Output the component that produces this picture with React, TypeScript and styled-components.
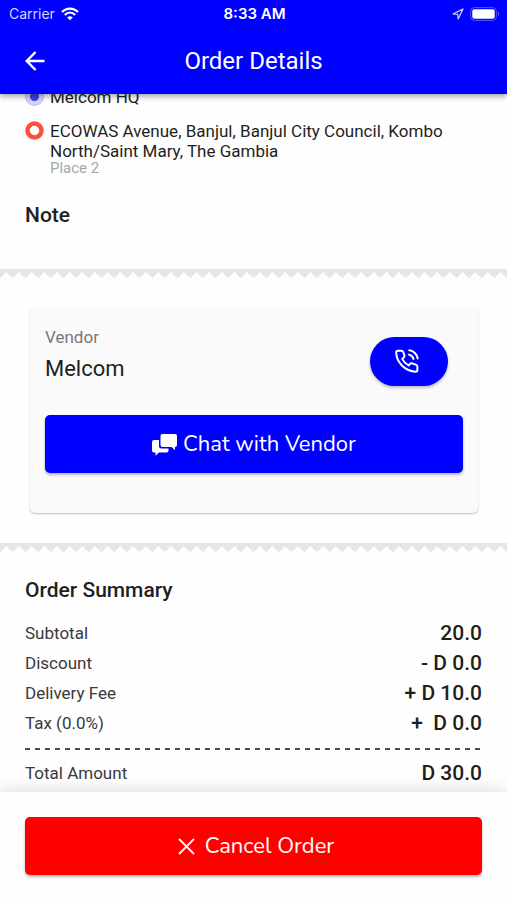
import React from "react";
import styled, { createGlobalStyle } from "styled-components";

const GlobalStyle = createGlobalStyle`
  *, *::before, *::after { box-sizing: border-box; }
  body {
    margin: 0;
    background: #fefefe;
    color: #1f1f21;
    font-family: Roboto, "Liberation Sans", sans-serif;
  }
  h1, h2, p, dl, dd, ul { margin: 0; padding: 0; }
`;

const Screen = styled.div`
  display: flex;
  flex-direction: column;
  height: 100vh;
`;

const Header = styled.header`
  z-index: 1;
  flex: none;
  background: #0000ff;
  color: #fff;
  box-shadow: 0 2px 6px rgba(0, 0, 0, 0.4);
`;

const StatusBar = styled.div`
  display: grid;
  grid-template-columns: 1fr auto 1fr;
  align-items: center;
  height: 28px;
  padding: 0 7px 0 9px;
  font: 14px/20px Inter, sans-serif;
`;

const StatusGroup = styled.div<{ $end?: boolean }>`
  display: flex;
  align-items: center;
  justify-content: ${(p) => (p.$end ? "flex-end" : "flex-start")};
  gap: 6px;
  color: #d6d6ff;
`;

const Clock = styled.time`
  font-size: 15px;
  font-weight: 600;
`;

const AppBar = styled.div`
  display: grid;
  grid-template-columns: 48px 1fr 48px;
  align-items: center;
  height: 66px;
  padding: 0 11px;
`;

const IconButton = styled.button`
  display: grid;
  place-items: center;
  height: 48px;
  padding: 0;
  border: 0;
  background: none;
  color: inherit;
`;

const Title = styled.h1`
  text-align: center;
  font-size: 24px;
  line-height: 32px;
  font-weight: 400;
`;

/* column-reverse keeps the list scrolled to its last line */
const Scroller = styled.main`
  display: flex;
  flex: 1;
  flex-direction: column-reverse;
  min-height: 0;
  overflow-y: auto;
  scrollbar-width: none;
`;

const Content = styled.div`
  flex: none;
`;

const Section = styled.section<{ $bottom?: number }>`
  padding: 0 25px ${(p) => p.$bottom ?? 0}px;
`;

const Stops = styled.ul`
  display: grid;
  gap: 14px;
  list-style: none;
  font-size: 17px;
  line-height: 20px;
`;

const Stop = styled.li`
  display: grid;
  grid-template-columns: 19px 1fr;
  gap: 6px;
`;

const StopNote = styled.p`
  color: #a3a6ad;
  font-size: 15px;
  line-height: 15px;
`;

const Heading = styled.h2`
  font-size: 21px;
  line-height: 28px;
  font-weight: 500;
`;

const NoteHeading = styled(Heading)`
  margin-top: 25px;
`;

const TornEdge = styled.div`
  height: 9px;
  background:
    linear-gradient(#e5e6e8, #e5e6e8) top / 100% 3px no-repeat,
    conic-gradient(from 134deg at 50% 0, #fefefe 0 90deg, #e5e6e8 92deg 358deg, #fefefe) 0 3px / 2.5% 6px repeat-x;
`;

const VendorCard = styled.section`
  margin: 30px 29px 30px 30px;
  padding: 18px 15px 40px;
  border-radius: 5px;
  background: #fafafa;
  box-shadow: 0 1px 2px rgba(0, 0, 0, 0.24);
`;

const VendorRow = styled.div`
  display: flex;
  align-items: center;
  justify-content: space-between;
  margin-bottom: 25px;
  padding-right: 15px;
`;

const VendorLabel = styled.p`
  color: #77777b;
  font-size: 17px;
  line-height: 22px;
`;

const VendorName = styled.p`
  padding: 5px 0;
  font-size: 22px;
  line-height: 32px;
`;

const CallButton = styled.button`
  display: grid;
  place-items: center;
  width: 78px;
  height: 49px;
  margin-top: 6px;
  padding: 0 4px 0 0;
  border: 0;
  border-radius: 25px;
  background: #0000ff;
  color: #fff;
  box-shadow: 0 2px 3px rgba(0, 0, 0, 0.24);
`;

const ActionButton = styled.button<{ $color: string; $gap: number }>`
  display: flex;
  align-items: center;
  justify-content: center;
  gap: ${(p) => p.$gap}px;
  width: 100%;
  height: 58px;
  padding: 0;
  border: 0;
  border-radius: 5px;
  background: ${(p) => p.$color};
  color: #fff;
  box-shadow: 0 2px 3px rgba(0, 0, 0, 0.28);
  font: 22px/30px Nunito, "Open Sans", sans-serif;
`;

const SummaryHeading = styled(Heading)`
  margin: 24px 0 14px;
`;

const Amounts = styled.dl`
  display: grid;
`;

const AmountRow = styled.div<{ $total?: boolean }>`
  display: flex;
  align-items: center;
  justify-content: space-between;
  height: ${(p) => (p.$total ? 38 : 30)}px;
`;

const AmountLabel = styled.dt`
  color: #39393b;
  font-size: 17px;
`;

const AmountValue = styled.dd`
  font-size: 21px;
  font-weight: 500;
  white-space: pre;
`;

const DashedRule = styled.div`
  height: 2px;
  margin: 10px 0 4px;
  background: repeating-linear-gradient(90deg, #4c4c4e 0 5px, transparent 5px 10px);
`;

const Footer = styled.footer`
  z-index: 1;
  flex: none;
  padding: 25px;
  background: #fefefe;
  box-shadow: 0 0 16px rgba(0, 0, 0, 0.16);
`;

const amounts = [
  { label: "Subtotal", value: "20.0" },
  { label: "Discount", value: "- D 0.0" },
  { label: "Delivery Fee", value: "+ D 10.0" },
  { label: "Tax (0.0%)", value: "+  D 0.0" },
];

const WifiIcon = () => (
  <svg width="18" height="14" viewBox="0 0 18 14" fill="none" stroke="#fff" strokeWidth="2.3" aria-hidden="true">
    <path d="M1 5C5.5.4 12.5.4 17 5M3.8 8C7 4.8 11 4.8 14.2 8" />
    <path d="M6.2 10.4Q9 7.9 11.8 10.4L9 13.3Z" fill="#fff" stroke="none" />
  </svg>
);

const LocationIcon = () => (
  <svg width="12" height="12" viewBox="0 0 12 12" fill="none" stroke="currentColor" strokeWidth="1.2" strokeLinejoin="round" aria-hidden="true">
    <path d="M11 1 1 6l4.7.4L6.2 11Z" />
  </svg>
);

const BatteryIcon = () => (
  <svg width="30" height="14" viewBox="0 0 30 14" aria-hidden="true">
    <rect x=".6" y=".6" width="25.8" height="12.8" rx="3.8" fill="none" stroke="#5555ff" />
    <rect x="2.3" y="2.3" width="22.4" height="9.4" rx="2" fill="#fff" />
    <path d="M28 4.6q2 2.4 0 4.8Z" fill="#7777ff" />
  </svg>
);

const BackIcon = () => (
  <svg width="20" height="20" viewBox="0 0 20 20" fill="none" stroke="currentColor" strokeWidth="2.4" aria-hidden="true">
    <path d="M19.5 10H2M10.6 1 1.700 10l8.9 9" />
  </svg>
);

const OriginMark = () => (
  <svg width="19" height="19" viewBox="0 0 19 19" aria-hidden="true">
    <circle cx="9.5" cy="9.5" r="9" fill="#d3d3fb" stroke="#bcbcf6" />
    <circle cx="9.5" cy="9.5" r="4.5" fill="#4040dd" />
  </svg>
);

const DestinationMark = () => (
  <svg width="19" height="19" viewBox="0 0 19 19" aria-hidden="true">
    <circle cx="9.5" cy="9.5" r="7" fill="#fff" stroke="#fb4f40" strokeWidth="4.5" />
  </svg>
);

const CallIcon = () => (
  <svg width="24" height="24" viewBox="0 0 24 24" fill="none" stroke="currentColor" strokeWidth="2" strokeLinecap="round" strokeLinejoin="round" aria-hidden="true">
    <path d="M3 1.7H6.4Q7.7 1.7 8.2 3L9.4 6.2Q9.9 7.6 8.7 8.6L7.2 9.9Q9.3 14.1 13.6 16.5L15 14.9Q15.9 13.9 17.3 14.4L21.2 15.9Q22.4 16.4 22.4 17.7V20.8Q22.4 22.7 20.5 22.7C10.3 22.2 1.6 13.8 1.2 3.8Q1.1 1.7 3 1.7Z" />
    <path d="M14.3 1.3Q21.2 2.5 22.7 9.5M14 5.6Q17.6 6.5 18.5 10" />
  </svg>
);

const ChatIcon = () => (
  <svg width="25" height="23" viewBox="0 0 25 23" fill="currentColor" aria-hidden="true">
    <path d="M10.5 1H23Q25 1 25 3V12Q25 14 23 14V17L19.5 14H10.5Q8.5 14 8.5 12V3Q8.5 1 10.5 1Z" />
    <path d="M2 7H7V13Q7 15.5 9.5 15.5H16.5V17.5Q16.5 19.5 14.5 19.5H7L3.5 22.8V19.5H2Q0 19.5 0 17.5V9Q0 7 2 7Z" />
  </svg>
);

const CloseIcon = () => (
  <svg width="22" height="17" viewBox="0 0 22 17" fill="none" stroke="currentColor" strokeWidth="1.8" aria-hidden="true">
    <path d="m6 1 15 15M21 1 6 16" />
  </svg>
);

export default function App() {
  return (
    <Screen>
      <GlobalStyle />
      <Header>
        <StatusBar>
          <StatusGroup>
            <span>Carrier</span>
            <WifiIcon />
          </StatusGroup>
          <Clock>8:33 AM</Clock>
          <StatusGroup $end>
            <LocationIcon />
            <BatteryIcon />
          </StatusGroup>
        </StatusBar>
        <AppBar>
          <IconButton type="button" aria-label="Back">
            <BackIcon />
          </IconButton>
          <Title>Order Details</Title>
        </AppBar>
      </Header>

      <Scroller>
        <Content>
          <Section $bottom={40}>
            <Stops>
              <Stop>
                <OriginMark />
                <p>Melcom HQ</p>
              </Stop>
              <Stop>
                <DestinationMark />
                <div>
                  <p>ECOWAS Avenue, Banjul, Banjul City Council, Kombo North/Saint Mary, The Gambia</p>
                  <StopNote>Place 2</StopNote>
                </div>
              </Stop>
            </Stops>
            <NoteHeading>Note</NoteHeading>
          </Section>

          <TornEdge />
          <VendorCard>
            <VendorRow>
              <div>
                <VendorLabel>Vendor</VendorLabel>
                <VendorName>Melcom</VendorName>
              </div>
              <CallButton type="button" aria-label="Call vendor">
                <CallIcon />
              </CallButton>
            </VendorRow>
            <ActionButton type="button" $color="#0000ff" $gap={6}>
              <ChatIcon />
              Chat with Vendor
            </ActionButton>
          </VendorCard>
          <TornEdge />

          <Section>
            <SummaryHeading>Order Summary</SummaryHeading>
            <Amounts>
              {amounts.map((row) => (
                <AmountRow key={row.label}>
                  <AmountLabel>{row.label}</AmountLabel>
                  <AmountValue>{row.value}</AmountValue>
                </AmountRow>
              ))}
            </Amounts>
            <DashedRule />
            <Amounts>
              <AmountRow $total>
                <AmountLabel>Total Amount</AmountLabel>
                <AmountValue>D 30.0</AmountValue>
              </AmountRow>
            </Amounts>
          </Section>
        </Content>
      </Scroller>

      <Footer>
        <ActionButton type="button" $color="#ff0000" $gap={10}>
          <CloseIcon />
          Cancel Order
        </ActionButton>
      </Footer>
    </Screen>
  );
}
